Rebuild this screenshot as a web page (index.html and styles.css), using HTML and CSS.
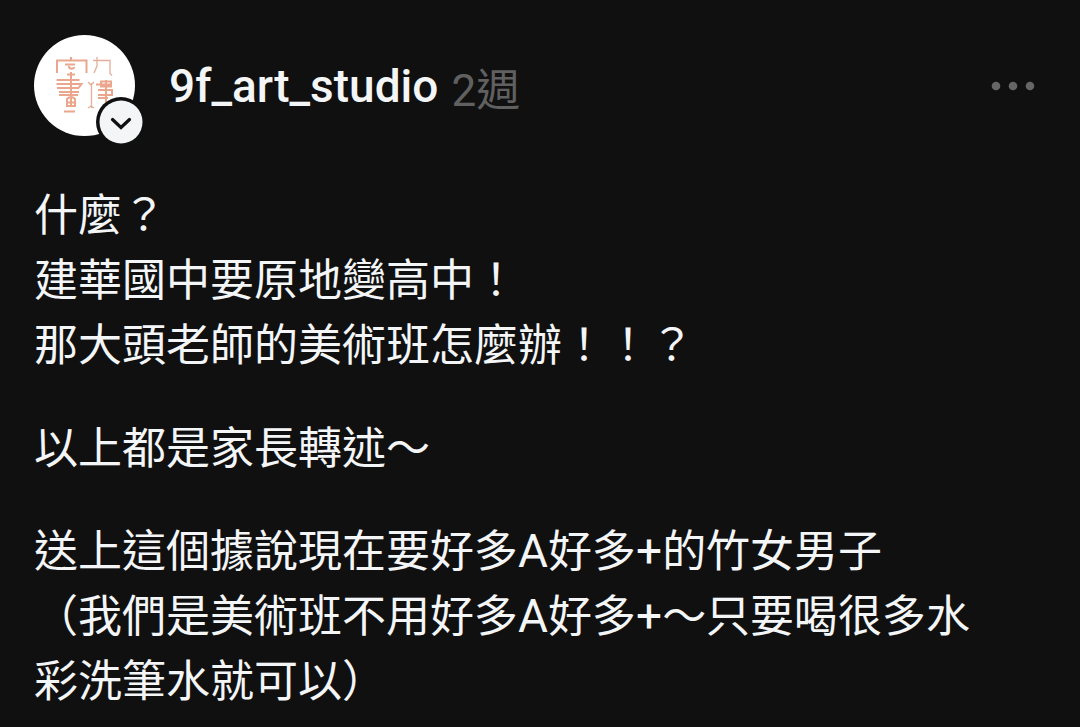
FILE: index.html
```html
<!DOCTYPE html>
<html lang="zh-Hant">
<head>
<meta charset="utf-8">
<title>9f_art_studio</title>
<link rel="stylesheet" href="styles.css">
</head>
<body>
<article class="post">
  <header class="header">
    <div class="avatar">
      <svg class="portrait" viewBox="34 35 102 102">
        <circle cx="84.500" cy="85.500" r="50.500" fill="#fff"/>
        <g fill="none" stroke="#eba68e" stroke-width="2">
          <path d="M57 73V60.500H86.500V73M71 57v4M65 64.500h10M69 66c0 4 5 3 5 1M67 74.500h8M71 72v23M56.500 80h23M56.500 84h25l-3 4M57 88h22M59 92h20M59 95h19M67 99q4-4 8 0v7h-8zM71 97v9M67 102.500h8M64 111.500h11"/>
        </g>
        <g fill="none" stroke="#e5ad9b" stroke-width="1.300">
          <path d="M93 60.500h17v13l2 2M97 57v9l-3 7M91.500 83v25M88 82l3 3 3-3M88 108l3-2 3 2"/>
          <path stroke="#eba68e" stroke-width="2" d="M96 84.500h16M101 81.500h10v5h-10zM98 90h14v5H98M98 98h10M106 80v28"/>
        </g>
      </svg>
      <svg class="badge" viewBox="0 0 50 50"><circle cx="25" cy="25" r="25" fill="#101010"/><circle cx="25" cy="25" r="21.500" fill="#f3f5f7"/><path d="M16.500 22.500l8.500 8 8.500-8" fill="none" stroke="#101010" stroke-width="3.200" stroke-linecap="round"/></svg>
    </div>
    <span class="name">9f_art_studio</span>
    <span class="time">2週</span>
    <svg class="more" viewBox="0 0 44 10"><g fill="#666"><circle cx="5" cy="5" r="4.300"/><circle cx="22" cy="5" r="4.300"/><circle cx="39" cy="5" r="4.300"/></g></svg>
  </header>
  <div class="content">
    <p>什麼？<br>建華國中要原地變高中！<br>那大頭老師的美術班怎麼辦！！？</p>
    <p>以上都是家長轉述～</p>
    <p>送上這個據說現在要好多<span class="latin">A</span>好多<span class="latin">+</span>的竹女男子<br>（我們是美術班不用好多<span class="latin">A</span>好多<span class="latin">+</span>～只要喝很多水<br>彩洗筆水就可以）</p>
  </div>
</article>
</body>
</html>
```
FILE: styles.css
```css
body { margin: 0; background: #101010; color: #f3f5f7; font-family: Roboto, "Noto Sans CJK TC", sans-serif; }
.post { width: 1080px; height: 727px; overflow: hidden; }
.header { display: flex; align-items: center; height: 102px; padding: 35px 45px 0 34px; }
.avatar { position: relative; width: 102px; height: 102px; margin-right: 33px; }
.portrait { display: block; width: 102px; height: 102px; }
.badge { position: absolute; left: 62px; top: 62px; width: 50px; height: 50px; }
.name { font-size: 46px; font-weight: 500; line-height: 60px; margin-right: 13px; }
.time { font-size: 44px; line-height: 60px; color: #606060; padding-top: 10px; }
.more { width: 44px; height: 10px; margin-left: auto; }
.content { padding: 47px 34px 0; font-size: 44px; line-height: 65px; white-space: nowrap; }
.content p { margin: 0 0 38px; }
.latin { font-size: 46px; line-height: 1; }
```
